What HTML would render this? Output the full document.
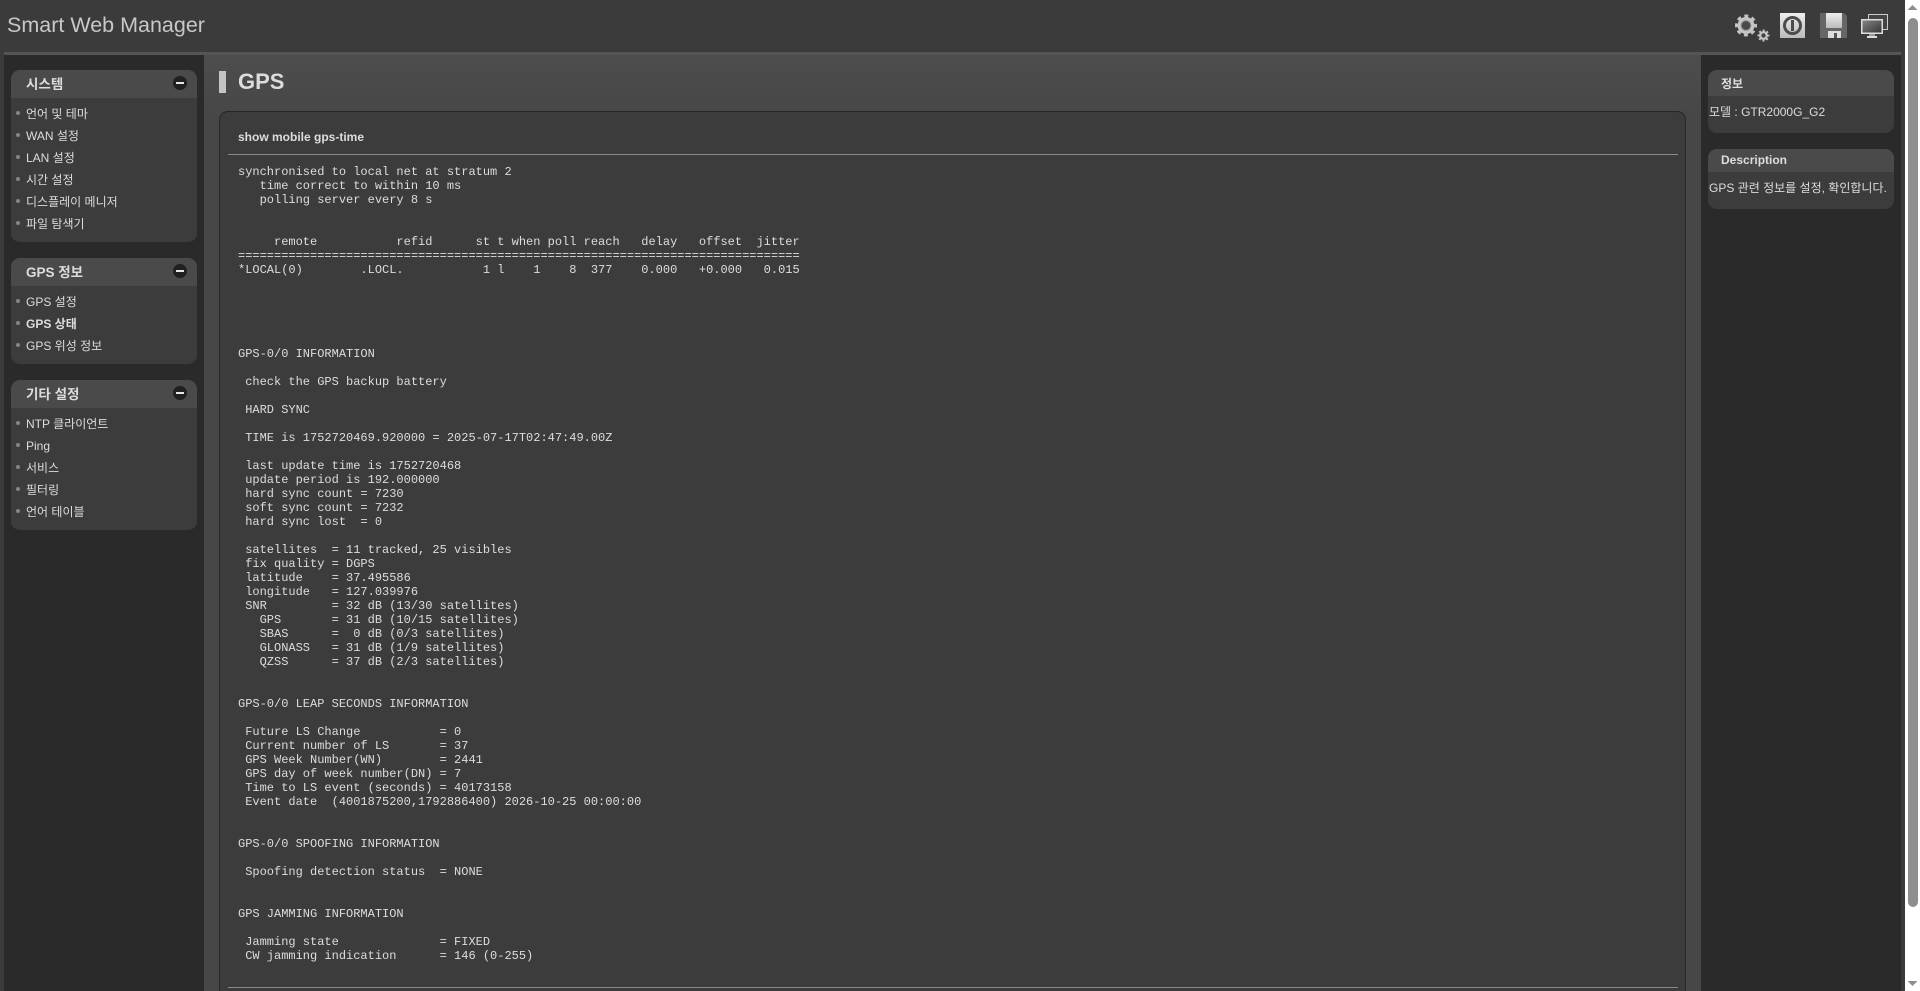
<!DOCTYPE html>
<html lang="ko"><head><meta charset="utf-8"><title>Smart Web Manager</title>
<style>
html,body{margin:0;padding:0;width:1920px;height:991px;overflow:hidden;background:#3b3b3b}
*{box-sizing:border-box}
body{font-family:"Liberation Sans","Noto Sans CJK KR",sans-serif;color:#ddd;font-size:12px;position:relative}
.a{position:absolute}
.title{left:7px;top:11px;font-size:21.5px;line-height:28px;color:#c8c8c8;white-space:nowrap}
.strip{left:4px;top:52px;width:1897px;height:3px;background:#555}
.side{left:4px;top:55px;width:200px;height:936px;background:#2a2a2a}
.rside{left:1701px;top:55px;width:200px;height:936px;background:#2a2a2a}
.content{left:204px;top:55px;width:1497px;height:936px;background:linear-gradient(#4d4d4d,#474747 60px,#474747)}
.panel{background:#3c3c3c;border-radius:9px;overflow:hidden}
.ph{background:#4a4a4a;position:relative}
.panel.l{left:11px;width:186px}
.panel.l .ph{height:28px;font-weight:bold;font-size:13.5px;line-height:29px;padding-left:15px;color:#ddd}
.min{position:absolute;left:162px;top:6px;width:14px;height:14px;border-radius:50%;background:#202020}
.min:after{content:"";position:absolute;left:3px;top:6px;width:8px;height:2px;background:#e8e8e8}
.it{position:absolute;left:15px;height:22px;line-height:25px;white-space:nowrap;color:#ddd;font-size:12px}
.it:before{content:"";position:absolute;left:-10px;top:9px;width:4px;height:4px;border-radius:50%;background:#858585}
.panel.r{left:1708px;width:186px}
.panel.r .ph{font-weight:bold;font-size:12px;padding-left:13px;color:#ddd}
.panel.r .t{position:absolute;left:1px;white-space:nowrap;font-size:12px;line-height:14px;color:#ddd}
.bar{left:219px;top:71px;width:7px;height:22px;background:#c4c4c4}
.h1{left:238px;top:69px;font-size:22px;line-height:26px;font-weight:bold;color:#ddd}
.card{left:219px;top:111px;width:1467px;height:890px;background:#3c3c3c;border:1px solid #262626;border-radius:9px}
.cap{left:238px;top:130px;font-size:12px;line-height:14px;font-weight:bold;color:#ddd;white-space:nowrap}
.hr{left:228px;width:1450px;height:1px;background:#8a8a8a}
pre{position:absolute;left:238px;top:165px;margin:0;font-family:"Liberation Mono",monospace;font-size:12px;line-height:14px;color:#ddd}
.sb{left:1905px;top:0;width:15px;height:991px;background:#fff}
.th{left:1908px;top:18px;width:10px;height:889px;background:#8e8e8e;border-radius:5px}
</style></head><body>
<div class="a title">Smart Web Manager</div>
<svg class="a" style="left:1730px;top:5px" width="165" height="40" viewBox="1730 5 165 40">
<defs>
<linearGradient id="g1" x1="0" y1="0" x2="0" y2="1"><stop offset="0" stop-color="#e8e8e8"/><stop offset="1" stop-color="#a0a0a0"/></linearGradient>
<linearGradient id="g2" x1="0" y1="0" x2="0" y2="1"><stop offset="0" stop-color="#eee"/><stop offset="1" stop-color="#bbb"/></linearGradient>
<linearGradient id="g4" x1="0" y1="0" x2="1" y2="1"><stop offset="0" stop-color="#888"/><stop offset="1" stop-color="#333"/></linearGradient>
</defs>
<circle cx="1746" cy="25.500" r="8.500" fill="#c4c4c4"/>
<circle cx="1746" cy="25.500" r="9.500" fill="none" stroke="#c4c4c4" stroke-width="3" stroke-dasharray="3.900 3.560" stroke-dashoffset="1.950"/>
<circle cx="1746" cy="25.500" r="4.800" fill="#4a4a4a" stroke="#8a8a8a" stroke-width="1"/>
<circle cx="1763.500" cy="35.500" r="4.500" fill="#c4c4c4"/>
<circle cx="1763.500" cy="35.500" r="5" fill="none" stroke="#c4c4c4" stroke-width="2" stroke-dasharray="2 1.930" stroke-dashoffset="1"/>
<circle cx="1763.500" cy="35.500" r="2.200" fill="#444"/>
<rect x="1780" y="13" width="25" height="25" fill="url(#g2)"/>
<circle cx="1792.500" cy="25.500" r="8" fill="none" stroke="#4d4d4d" stroke-width="3"/>
<rect x="1791" y="20" width="3" height="11" fill="#4d4d4d"/>
<path d="M1820 13h24l3 3v22h-27z" fill="#666"/>
<rect x="1826" y="13" width="16" height="15" fill="url(#g2)"/>
<rect x="1828" y="31" width="13" height="7" fill="#ddd"/>
<rect x="1834" y="33" width="3" height="5" fill="#555"/>
<rect x="1868.500" y="14.500" width="19" height="15" fill="#444" stroke="#ccc"/>
<rect x="1861.750" y="19.750" width="20.500" height="13.500" fill="url(#g4)" stroke="#ddd" stroke-width="1.500"/>
<rect x="1869" y="34" width="6" height="2" fill="#999"/>
<rect x="1867" y="36" width="10" height="2" fill="#ddd"/>
</svg>
<div class="a strip"></div>
<div class="a side"></div>
<div class="a content"></div>
<div class="a rside"></div>

<div class="a panel l" style="top:70px;height:172px"><div class="ph">시스템<div class="min"></div></div>
<div class="it" style="top:32px">언어 및 테마</div>
<div class="it" style="top:54px">WAN 설정</div>
<div class="it" style="top:76px">LAN 설정</div>
<div class="it" style="top:98px">시간 설정</div>
<div class="it" style="top:120px">디스플레이 메니저</div>
<div class="it" style="top:142px">파일 탐색기</div></div>

<div class="a panel l" style="top:258px;height:106px"><div class="ph">GPS 정보<div class="min"></div></div>
<div class="it" style="top:32px">GPS 설정</div>
<div class="it" style="top:54px;font-weight:bold">GPS 상태</div>
<div class="it" style="top:76px">GPS 위성 정보</div></div>

<div class="a panel l" style="top:380px;height:150px"><div class="ph">기타 설정<div class="min"></div></div>
<div class="it" style="top:32px">NTP 클라이언트</div>
<div class="it" style="top:54px">Ping</div>
<div class="it" style="top:76px">서비스</div>
<div class="it" style="top:98px">필터링</div>
<div class="it" style="top:120px">언어 테이블</div></div>

<div class="a panel r" style="top:70px;height:63px"><div class="ph" style="height:26px;line-height:29px">정보</div><div class="t" style="top:35px">모델 : GTR2000G_G2</div></div>
<div class="a panel r" style="top:149px;height:60px"><div class="ph" style="height:23px;line-height:22px">Description</div><div class="t" style="top:32px">GPS 관련 정보를 설정, 확인합니다.</div></div>

<div class="a bar"></div>
<div class="a h1">GPS</div>
<div class="a card"></div>
<div class="a cap">show mobile gps-time</div>
<div class="a hr" style="top:154px"></div>
<pre>synchronised to local net at stratum 2
   time correct to within 10 ms
   polling server every 8 s


     remote           refid      st t when poll reach   delay   offset  jitter
==============================================================================
*LOCAL(0)        .LOCL.           1 l    1    8  377    0.000   +0.000   0.015





GPS-0/0 INFORMATION

 check the GPS backup battery

 HARD SYNC

 TIME is 1752720469.920000 = 2025-07-17T02:47:49.00Z

 last update time is 1752720468
 update period is 192.000000
 hard sync count = 7230
 soft sync count = 7232
 hard sync lost  = 0

 satellites  = 11 tracked, 25 visibles
 fix quality = DGPS
 latitude    = 37.495586
 longitude   = 127.039976
 SNR         = 32 dB (13/30 satellites)
   GPS       = 31 dB (10/15 satellites)
   SBAS      =  0 dB (0/3 satellites)
   GLONASS   = 31 dB (1/9 satellites)
   QZSS      = 37 dB (2/3 satellites)


GPS-0/0 LEAP SECONDS INFORMATION

 Future LS Change           = 0
 Current number of LS       = 37
 GPS Week Number(WN)        = 2441
 GPS day of week number(DN) = 7
 Time to LS event (seconds) = 40173158
 Event date  (4001875200,1792886400) 2026-10-25 00:00:00


GPS-0/0 SPOOFING INFORMATION

 Spoofing detection status  = NONE


GPS JAMMING INFORMATION

 Jamming state              = FIXED
 CW jamming indication      = 146 (0-255)</pre>
<div class="a hr" style="top:987px"></div>
<div class="a sb"></div>
<div class="a th"></div>
<svg class="a" style="left:1905px;top:0" width="15" height="991"><path d="M7.500 5l5 5h-10z" fill="#8e8e8e"/><path d="M7.500 986l5-5h-10z" fill="#8e8e8e"/></svg>
</body></html>
